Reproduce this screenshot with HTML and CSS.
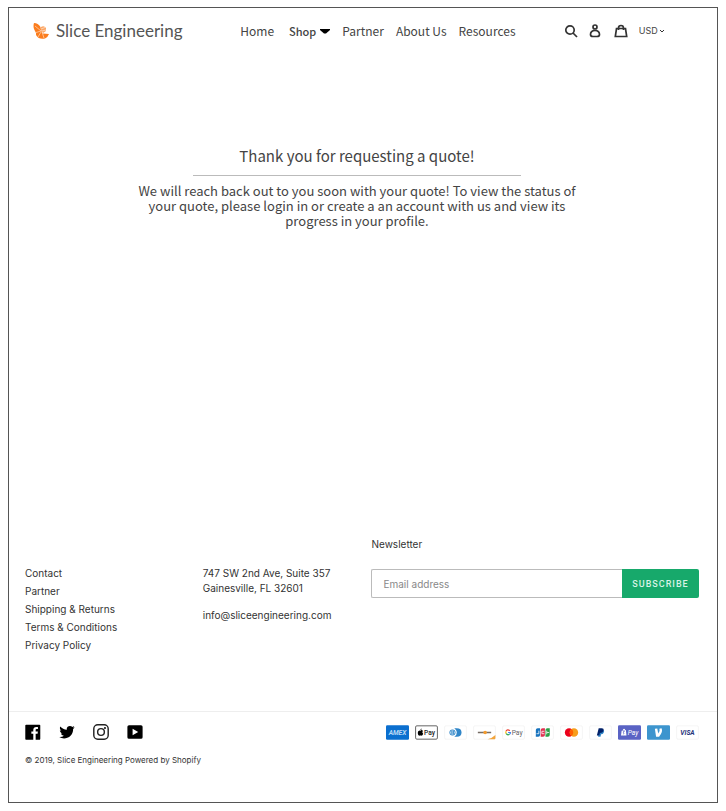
FILE: index.html
```html
<!DOCTYPE html>
<html lang="en">
<head>
  <meta charset="UTF-8">
  <meta name="viewport" content="width=device-width, initial-scale=1.0">
  <title>Slice Engineering</title>
  <link rel="stylesheet" href="styles.css">
</head>
<body>
  <div class="page">
    <header class="header">
      <a class="logo" href="#">
        <svg class="logo-mark" viewBox="0 0 16 16" aria-hidden="true">
          <path fill="#fb7d1e" d="M1 0Q5 0 7.500 4L8 7.500 10 10.500 16 11Q15 14 12 15.500Q6 17 3 12L3 10 1 6Q0 3 1 0Z"/>
          <path fill="#fba564" d="M8 4Q11 2 13 5L13 8 10 10 8 7Z"/>
          <path stroke="#fff" stroke-width=".5" fill="none" d="M8 8L2 3M8 8L3 9.500M8 9L5 14M9 9L11 15M8 6L12 4.500M9 8L13 7"/>
        </svg>
        <span>Slice Engineering</span>
      </a>
      <nav class="nav">
        <a href="#">Home</a>
        <a class="nav-shop" href="#">Shop
          <svg class="caret" viewBox="0 0 10 6" aria-hidden="true"><path d="M0 1h10v1L6 5.500H4L0 2z"/></svg>
        </a>
        <a href="#">Partner</a>
        <a href="#">About Us</a>
        <a href="#">Resources</a>
      </nav>
      <div class="tools">
        <a href="#" aria-label="Search">
          <svg viewBox="0 0 14 14"><circle cx="6" cy="6" r="4.200"/><path d="M9 9l4 4"/></svg>
        </a>
        <a href="#" aria-label="Log in">
          <svg viewBox="0 0 14 14"><circle cx="6" cy="3" r="2"/><path d="M6 6.500C3 6.500 1.500 8.500 1.500 10.500Q1.500 12.500 4 12.500H8Q10.500 12.500 10.500 10.500C10.500 8.500 9 6.500 6 6.500Z"/></svg>
        </a>
        <a href="#" aria-label="Cart">
          <svg viewBox="0 0 14 14"><path d="M2.500 4.500h9l1.200 8H1.300zM4.500 6V4Q4.500 1.500 7 1.500T9.500 4v2"/></svg>
        </a>
        <div class="currency">
          <select aria-label="Currency">
            <option>USD</option>
            <option>EUR</option>
          </select>
          <svg class="chevron" viewBox="0 0 6 4" aria-hidden="true"><path d="M1 1l2 2 2-2"/></svg>
        </div>
      </div>
    </header>

    <main class="main">
      <h1 class="title">Thank you for requesting a quote!</h1>
      <p class="message">We will reach back out to you soon with your quote! To view the status of your quote, please login in or create a an account with us and view its progress in your profile.</p>
    </main>

    <footer class="footer">
      <div class="footer-top">
        <ul class="links">
          <li><a href="#">Contact</a></li>
          <li><a href="#">Partner</a></li>
          <li><a href="#">Shipping &amp; Returns</a></li>
          <li><a href="#">Terms &amp; Conditions</a></li>
          <li><a href="#">Privacy Policy</a></li>
        </ul>
        <address class="address">
          <p>747 SW 2nd Ave, Suite 357<br>Gainesville, FL 32601</p>
          <p><a href="#">info@sliceengineering.com</a></p>
        </address>
        <form class="newsletter">
          <label for="email">Newsletter</label>
          <div class="field">
            <input type="email" id="email" placeholder="Email address">
            <button type="submit">SUBSCRIBE</button>
          </div>
        </form>
      </div>

      <div class="footer-bottom">
        <div class="icons">
          <div class="social">
            <a href="#" aria-label="Facebook">
              <svg viewBox="0 0 20 20"><path d="M18.050.811q.439 0 .744.305t.305.744v16.637q0 .439-.305.744t-.744.305h-4.732v-7.221h2.415l.342-2.854h-2.757v-1.830q0-.659.293-1t1.073-.342h1.488V3.762q-.976-.098-2.171-.098-1.634 0-2.635.964t-1 2.720V9.470H7.951v2.854h2.415v7.221H1.413q-.439 0-.744-.305t-.305-.744V1.859q0-.439.305-.744T1.413.810H18.050z"/></svg>
            </a>
            <a href="#" aria-label="Twitter">
              <svg viewBox="0 0 20 20"><path d="M19.551 4.208q-.815 1.202-1.956 2.038 0 .082.020.255t.020.255q0 1.589-.469 3.179t-1.426 3.036-2.272 2.567-3.158 1.793-3.963.672q-3.301 0-6.031-1.773.571.041.937.041 2.751 0 4.911-1.671-1.284-.020-2.292-.784T2.456 11.850q.346.082.754.082.550 0 1.039-.163-1.365-.285-2.262-1.365T1.090 7.918v-.041q.774.408 1.773.448-.795-.530-1.263-1.396t-.469-1.864q0-1.019.509-1.997 1.487 1.854 3.596 2.924T9.810 7.184q-.143-.509-.143-.897 0-1.630 1.161-2.781t2.832-1.151q.815 0 1.569.326t1.284.917q1.345-.265 2.506-.958-.428 1.386-1.732 2.180 1.243-.163 2.262-.611z"/></svg>
            </a>
            <a href="#" aria-label="Instagram">
              <svg viewBox="0 0 20 20"><g fill="none" stroke="#222" stroke-width="1.800"><rect x="1" y="1" width="18" height="18" rx="5"/><circle cx="10" cy="10" r="4.200"/></g><circle cx="15" cy="5" r="1.200"/></svg>
            </a>
            <a href="#" aria-label="YouTube">
              <svg viewBox="0 0 20 20"><path fill-rule="evenodd" d="M2.500 1.500h15q2 0 2 2v13q0 2-2 2h-15q-2 0-2-2v-13q0-2 2-2zM7 6v8l7-4z"/></svg>
            </a>
          </div>
          <ul class="payments">
            <li>
              <svg viewBox="0 0 38 24" role="img" aria-label="American Express"><rect width="38" height="24" rx="2" fill="#0b6fcf"/><text x="19" y="16" class="card-text amex">AMEX</text></svg>
            </li>
            <li>
              <svg viewBox="0 0 38 24" role="img" aria-label="Apple Pay"><rect x="1" y="1" width="36" height="22" rx="2" fill="#fff" stroke="#555" stroke-width="1.500"/><path d="M9 9Q11 7 13 9Q11 12 13.500 14Q12 18 10 17Q9 16.500 8 17Q5 18 4.500 13Q4.500 8 9 9ZM9 8Q9 5.500 11 5.500Q11 8 9 8Z"/><text x="24" y="16" class="card-text pay">Pay</text></svg>
            </li>
            <li>
              <svg viewBox="0 0 38 24" role="img" aria-label="Diners Club"><rect x="1" y="1" width="36" height="22" rx="2" class="card"/><path fill="#3086c8" d="M17 5h4q8 0 8 7t-8 7h-4q9-7 0-14z"/><circle cx="14" cy="12" r="5" fill="#3086c8"/><circle cx="14" cy="12" r="3.800" fill="#c5def0"/><path stroke="#3086c8" stroke-width="1.500" d="M13 9v6M15.500 9v6"/></svg>
            </li>
            <li>
              <svg viewBox="0 0 38 24" role="img" aria-label="Discover"><rect x="1" y="1" width="36" height="22" rx="2" class="card"/><path stroke="#776d65" stroke-width="2.500" d="M8 12h22"/><circle cx="20" cy="12" r="3" fill="#f39b2d"/><path fill="#f3a43b" d="M24 23Q32 21 37 16v6l-1 1z"/></svg>
            </li>
            <li>
              <svg viewBox="0 0 38 24" role="img" aria-label="Google Pay"><rect x="1" y="1" width="36" height="22" rx="2" class="card"/><g fill="none" stroke-width="2"><path stroke="#ea4335" d="M13 9Q9 6 6.500 10"/><path stroke="#fbbc04" d="M6.500 10Q6 12 7 14"/><path stroke="#34a853" d="M7 14Q9 17 12.500 15"/><path stroke="#4285f4" d="M10 12h4q0 2-1.500 3"/></g><text x="25" y="16" class="card-text gpay">Pay</text></svg>
            </li>
            <li>
              <svg viewBox="0 0 38 24" role="img" aria-label="JCB"><rect x="1" y="1" width="36" height="22" rx="2" class="card"/><path fill="#1672bd" d="M11 5h4v11q0 3-3 3H8V8q0-3 3-3z"/><path fill="#df3150" d="M19 5h4v11q0 3-3 3h-4V8q0-3 3-3z"/><path fill="#2b9f45" d="M27 5h4v11q0 3-3 3h-4V8q0-3 3-3z"/><path stroke="#fff" stroke-width="1.300" fill="none" d="M13 9v5H9M22 10h-4v4h4M26 9v6M26 12h4"/></svg>
            </li>
            <li>
              <svg viewBox="0 0 38 24" role="img" aria-label="Mastercard"><rect x="1" y="1" width="36" height="22" rx="2" class="card"/><circle cx="15" cy="12" r="7" fill="#eb001b"/><circle cx="23" cy="12" r="7" fill="#f79e1b"/><path fill="#ff5f00" d="M19 6.300a7 7 0 0 1 0 11.400 7 7 0 0 1 0-11.400z"/></svg>
            </li>
            <li>
              <svg viewBox="0 0 38 24" role="img" aria-label="PayPal"><rect x="1" y="1" width="36" height="22" rx="2" class="card"/><path fill="#3086c8" d="M17 8h7q2 2 0 5-1 2-4 2l-1 4h-4z"/><path fill="#012169" d="M16 5h5q4 0 3 4t-6 4l-1 4h-4z"/></svg>
            </li>
            <li>
              <svg viewBox="0 0 38 24" role="img" aria-label="Shop Pay"><rect width="38" height="24" rx="2" fill="#5a63c4"/><path fill="#fff" d="M6 9l7-1 1 9H5zM8 8q2-4 4 0z"/><path stroke="#5a63c4" stroke-width="1.500" fill="none" d="M11 10q-3 0-2 2t0 3"/><text x="25" y="16" class="card-text shop-pay">Pay</text></svg>
            </li>
            <li>
              <svg viewBox="0 0 38 24" role="img" aria-label="Venmo"><rect width="38" height="24" rx="2" fill="#3d95ce"/><path fill="#fff" d="M13 6l4-.500 1.500 8Q22 9 20.500 6L24 5q3 5-4 14h-5z"/></svg>
            </li>
            <li>
              <svg viewBox="0 0 38 24" role="img" aria-label="Visa"><rect x="1" y="1" width="36" height="22" rx="2" class="card"/><text x="19" y="16" class="card-text visa">VISA</text></svg>
            </li>
          </ul>
        </div>
        <p class="copyright">© 2019, <a href="#">Slice Engineering</a> <a href="#">Powered by Shopify</a></p>
      </div>
    </footer>
  </div>
</body>
</html>
```
FILE: styles.css
```css
* {
  box-sizing: border-box;
}

body {
  margin: 0;
  padding: 7px 8px 8px;
  min-height: 100vh;
  display: flex;
  background: #fff;
  color: #333;
  font-family: Inter, "Liberation Sans", sans-serif;
  font-size: 10px;
}

a {
  color: inherit;
  text-decoration: none;
}

ul, p, h1 {
  margin: 0;
  padding: 0;
  list-style: none;
}

.page {
  flex: 1;
  display: flex;
  flex-direction: column;
  border: 1px solid #555;
}

/* Header */
.header {
  display: grid;
  grid-template-columns: 207fr 323fr 153fr;
  align-items: center;
  height: 45px;
  padding-left: 24px;
}

.logo {
  display: flex;
  align-items: center;
  gap: 7px;
  font-family: Lato, sans-serif;
  font-size: 17px;
  color: #555;
  white-space: nowrap;
}

.logo-mark {
  width: 16px;
  height: 16px;
}

.nav {
  display: flex;
  align-items: center;
  gap: 12px;
  font-family: "Noto Sans CJK SC", sans-serif;
  font-size: 12px;
  line-height: 20px;
  color: #444;
  white-space: nowrap;
}

.nav-shop {
  display: flex;
  align-items: center;
  gap: 4px;
  padding-left: 3px;
  font-size: 11px;
  font-weight: 500;
}

.caret {
  width: 10px;
  height: 6px;
}

.tools {
  display: flex;
  align-items: center;
  gap: 11px;
}

.tools a {
  display: flex;
}

.tools svg {
  width: 14px;
  height: 14px;
  fill: none;
  stroke: #333;
  stroke-width: 1.7;
}

.currency {
  display: flex;
  align-items: center;
  gap: 1px;
}

.currency select {
  appearance: none;
  border: 0;
  padding: 0;
  background: none;
  color: #444;
  font-family: inherit;
  font-size: 9px;
}

.tools .chevron {
  width: 6px;
  height: 4px;
  stroke-width: 1;
}

/* Message */
.main {
  flex: 1;
  padding: 91px 12px 0 0;
  font-family: "Noto Sans CJK SC", sans-serif;
  color: #444;
  text-align: center;
}

.title {
  width: 47%;
  margin: 0 auto 7px;
  padding-bottom: 7px;
  border-bottom: 1px solid #bbb;
  font-size: 15px;
  font-weight: 400;
  line-height: 24px;
  white-space: nowrap;
}

.message {
  max-width: 460px;
  margin: 0 auto;
  font-size: 13px;
  line-height: 15px;
}

/* Footer */
.footer-top {
  display: grid;
  grid-template-columns: 178fr 169fr 328fr;
  padding: 0 18px 57px 16px;
}

.links {
  padding-top: 28px;
}

.links li {
  line-height: 18px;
}

.address {
  padding-top: 30px;
  font-style: normal;
  line-height: 15px;
}

.address p {
  margin-bottom: 12px;
}

.newsletter label {
  display: block;
  line-height: 16px;
}

.field {
  display: flex;
  height: 29px;
  margin-top: 17px;
}

.field input {
  flex: 1;
  min-width: 0;
  padding: 0 11px;
  border: 1px solid #bbb;
  border-right: 0;
  border-radius: 2px 0 0 2px;
  font-family: inherit;
  font-size: 10px;
}

.field input::placeholder {
  color: #888;
}

.field button {
  width: 77px;
  padding: 0;
  border: 0;
  border-radius: 0 2px 2px 0;
  background: #17a96b;
  color: #d8f3e6;
  font-family: Roboto, sans-serif;
  font-size: 9px;
  font-weight: 500;
  letter-spacing: 1px;
}

.footer-bottom {
  padding: 12px 18px 35px 16px;
  border-top: 1px solid #eee;
}

.icons {
  display: flex;
  justify-content: space-between;
  align-items: center;
}

.social {
  display: flex;
  gap: 18px;
}

.social a,
.payments li {
  display: flex;
}

.social svg {
  width: 16px;
  height: 16px;
}

.payments {
  display: flex;
  gap: 6px;
}

.payments svg {
  width: 23px;
  height: 15px;
}

.card {
  fill: #fff;
  stroke: #eee;
  stroke-width: 1;
}

.card-text {
  font-family: Roboto, sans-serif;
  font-size: 11px;
  text-anchor: middle;
}

.amex {
  fill: #b9d9f5;
  font-style: italic;
  font-weight: 700;
}

.pay {
  fill: #222;
  font-weight: 500;
}

.gpay {
  fill: #666;
}

.shop-pay {
  fill: #fff;
  font-style: italic;
}

.visa {
  fill: #26337a;
  font-weight: 700;
  font-style: italic;
}

.copyright {
  margin-top: 13px;
  font-size: 8px;
  line-height: 14px;
}
```
